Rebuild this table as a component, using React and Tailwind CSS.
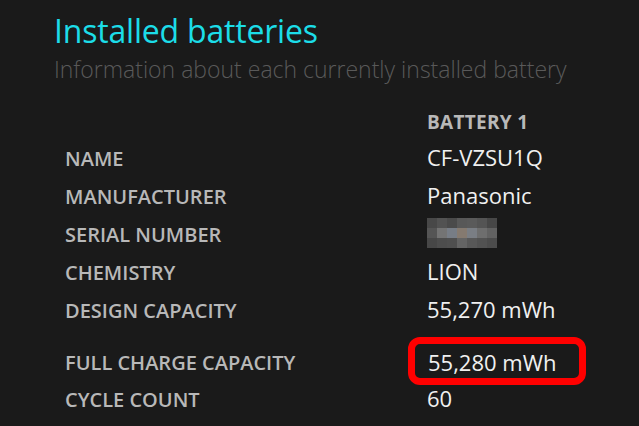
import React from "react";

const rows = [
  { label: "NAME", value: "CF-VZSU1Q" },
  { label: "MANUFACTURER", value: "Panasonic" },
  { label: "SERIAL NUMBER", value: null },
  { label: "CHEMISTRY", value: "LION" },
  { label: "DESIGN CAPACITY", value: "55,270 mWh" },
];

// pixelated serial number
const mosaic = [
  ["#484848", "#525252", "#4a4a4a", "#585858", "#5a5a5a", "#545454", "#474747"],
  ["#555555", "#747474", "#777d86", "#857a70", "#7a7e84", "#6e6e6e", "#626262"],
  ["#474747", "#4d4d4d", "#4f4f4f", "#646464", "#585858", "#525252", "#4c4c4c"],
];

function Mosaic() {
  return (
    <div className="flex flex-col">
      {mosaic.map((r, i) => (
        <div key={i} className="flex">
          {r.map((c, j) => (
            <div key={j} className="w-[10px] h-[10px]" style={{ backgroundColor: c }} />
          ))}
        </div>
      ))}
    </div>
  );
}

const labelCls = "text-[#b8b8b8] text-[20px] font-semibold pt-[3px]";

export default function App() {
  return (
    <div className="w-[639px] h-[426px] overflow-hidden bg-[#1a1a1a] font-['Open_Sans',sans-serif] pl-[54px] pt-[9px]">
      <h1 className="text-[#1cdde8] text-[32px] leading-[44px] tracking-[-0.2px]">Installed batteries</h1>
      <p className="text-[#595959] text-[23px] leading-[32px] font-light">
        Information about each currently installed battery
      </p>

      <div className="ml-[11px] mt-[21px]">
        <div className="flex h-[32px] items-center">
          <div className="w-[362px]" />
          <div className="text-[#b8b8b8] text-[19px] font-bold tracking-[0.3px]">BATTERY 1</div>
        </div>
        {rows.map((r) => (
          <div key={r.label} className="flex h-[38px] items-center">
            <div className={`w-[362px] ${labelCls}`}>{r.label}</div>
            {r.value ? (
              <div className="text-[#f0f0f0] text-[22px]">{r.value}</div>
            ) : (
              <Mosaic />
            )}
          </div>
        ))}
        <div className="flex pt-[9px]">
          <div className={`w-[343px] h-[48px] flex items-center ${labelCls}`}>
            FULL CHARGE CAPACITY
          </div>
          <div className="w-[178px] h-[48px] border-[7px] border-[#ff0000] rounded-[12px] flex items-center pl-[13px] pt-[2px] text-[#f0f0f0] text-[22px]">
            55,280 mWh
          </div>
        </div>
        <div className="flex h-[26px] items-center">
          <div className={`w-[362px] ${labelCls}`}>CYCLE COUNT</div>
          <div className="text-[#f0f0f0] text-[22px]">60</div>
        </div>
      </div>
    </div>
  );
}
